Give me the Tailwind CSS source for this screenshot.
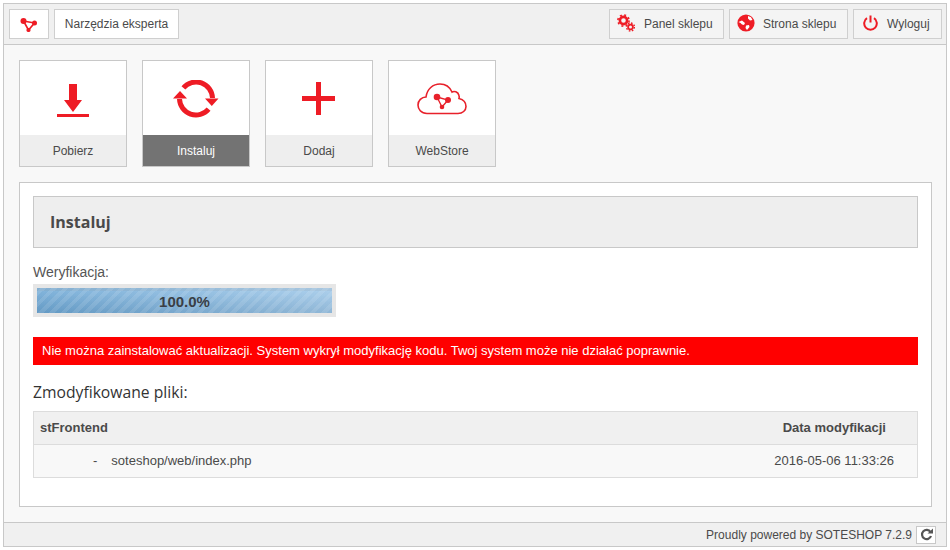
<!DOCTYPE html>
<html lang="pl">
  <head>
    <meta charset="UTF-8" />
    <title>Instaluj</title>
    <script src="https://cdn.jsdelivr.net/npm/@tailwindcss/browser@4"></script>
  </head>
  <body class="bg-white font-['Liberation_Sans',sans-serif] text-[12px] text-[#4a4a4a]">
    <div class="mx-[3px] mt-[3px] flex h-[544px] w-[944px] flex-col border border-[#c8c8c8] bg-[#f8f8f8]">
      <!-- top bar -->
      <div class="flex h-[41px] shrink-0 items-start justify-between border-b border-[#c8c8c8] bg-[#f0f0f0] pl-[5px] pr-[4px] pt-[5px]">
        <div class="flex gap-[5px]">
          <div class="flex h-[30px] w-[40px] items-center justify-center border border-[#cfcfcf] bg-white">
            <svg width="18" height="15" viewBox="0 0 18 15" fill="none" stroke="#ee1c25" stroke-width="1.6"><path d="M3.5 4 L14.5 6 L8.5 13 Z" /><circle cx="3.5" cy="4" r="3" fill="#ee1c25" stroke="none" /><circle cx="14.5" cy="6" r="2.5" fill="#ee1c25" stroke="none" /><circle cx="8.5" cy="13" r="2.1" fill="#ee1c25" stroke="none" /></svg>
          </div>
          <div class="flex h-[30px] w-[125px] items-center justify-center border border-[#cfcfcf] bg-white">Narzędzia eksperta</div>
        </div>
        <div class="flex gap-[5px]">
          <div class="flex h-[30px] w-[115px] items-center gap-[9px] border border-[#cfcfcf] bg-[#f4f4f4] pl-[7px]">
            <svg width="18" height="18" viewBox="0 0 18 18" class="mb-[2px]"><g fill="none" stroke="#ee1c25"><circle cx="6.5" cy="6.5" r="3.6" stroke-width="2.6" /><circle cx="13.5" cy="13" r="2.4" stroke-width="1.8" /><circle cx="6.5" cy="6.5" r="5.6" stroke-width="1.6" stroke-dasharray="2 2.4" /><circle cx="13.5" cy="13" r="4" stroke-width="1.4" stroke-dasharray="1.6 1.55" /></g></svg>
            <span>Panel sklepu</span>
          </div>
          <div class="flex h-[30px] w-[119px] items-center gap-[8px] border border-[#cfcfcf] bg-[#f4f4f4] pl-[7px]">
            <svg width="18" height="18" viewBox="0 0 18 18" class="mb-[2px]"><circle cx="9" cy="9" r="8.6" fill="#ee1c25" /><path d="M1.5 8 L5 6.5 L8 9 L7 11 L5 10.5 L3.5 9 Z M9 11.5 L12 11 L12.5 13 L10 16 L8.5 14 Z M11 2 L14 3.2 L15.5 6 L13 6.5 L11 4.5 Z" fill="#fff" /></svg>
            <span>Strona sklepu</span>
          </div>
          <div class="flex h-[30px] w-[89px] items-center gap-[9px] border border-[#cfcfcf] bg-[#f4f4f4] pl-[9px]">
            <svg width="15" height="16" viewBox="0 0 15 16" fill="none" stroke="#ee1c25" stroke-width="2" class="mb-[3px]"><path d="M4 3.2 A6.3 6.3 0 1 0 11 3.2" /><path d="M7.5 0.5 V7.5" /></svg>
            <span>Wyloguj</span>
          </div>
        </div>
      </div>
      <div class="flex flex-1 flex-col px-[15px] pt-[15px]">
        <!-- tiles -->
        <div class="flex gap-[15px]">
          <div class="flex h-[107px] w-[108px] flex-col border border-[#c8c8c8] bg-white">
            <div class="flex flex-1 items-center justify-center">
              <svg width="32" height="33" viewBox="0 0 32 33" fill="#ee1c25" class="mt-[5px]"><path d="M12 0 H20 V16 H25 L16 28 L7 16 H12 Z" /><rect x="0" y="30" width="32" height="3" /></svg>
            </div>
            <div class="flex h-[31px] items-center justify-center bg-[#eeeeee]">Pobierz</div>
          </div>
          <div class="flex h-[107px] w-[108px] flex-col border border-[#c8c8c8] bg-white">
            <div class="flex flex-1 items-center justify-center">
              <svg width="46" height="38" viewBox="0 0 46 38" fill="none" class="mt-[1px]"><path d="M10.4 7.9 A16.5 16.5 0 0 1 39.5 18" stroke="#ee1c25" stroke-width="5" /><path d="M35.6 29.1 A16.5 16.5 0 0 1 6.5 19" stroke="#ee1c25" stroke-width="5" /><path d="M32 18.5 H45.5 L38.8 26 Z M0 18.5 H14 L7 11 Z" fill="#ee1c25" /></svg>
            </div>
            <div class="flex h-[31px] items-center justify-center bg-[#737373] text-white">Instaluj</div>
          </div>
          <div class="flex h-[107px] w-[108px] flex-col border border-[#c8c8c8] bg-white">
            <div class="flex flex-1 items-center justify-center">
              <svg width="33" height="33" viewBox="0 0 33 33" fill="#ee1c25" class="mr-[2px] mt-[1px]"><rect x="14" y="0" width="5" height="33" /><rect x="0" y="14" width="33" height="5" /></svg>
            </div>
            <div class="flex h-[31px] items-center justify-center bg-[#eeeeee]">Dodaj</div>
          </div>
          <div class="flex h-[107px] w-[108px] flex-col border border-[#c8c8c8] bg-white">
            <div class="flex flex-1 items-center justify-center">
              <svg width="50" height="32" viewBox="0 0 50 32" class="mt-[1px]"><path d="M10 30.5 C4 30.5 1 26 1 22 C1 17.5 4.5 14 9 14 C10 6 16 1 23 1 C29 1 33 4.5 35 9 C37 7.8 41 8.5 42 12.5 C42.3 13.5 42.3 14.5 42 15.5 C46 16.5 49 19.5 49 23.5 C49 27.5 45.5 30.5 41 30.5 Z" fill="none" stroke="#e8212b" stroke-width="1.6" /><path d="M20 14 L31 17 L25 24 Z" fill="none" stroke="#e8212b" stroke-width="1.3" /><circle cx="20" cy="14" r="3.3" fill="#e8212b" /><circle cx="31" cy="17" r="3" fill="#e8212b" /><circle cx="25" cy="24" r="2.3" fill="#e8212b" /></svg>
            </div>
            <div class="flex h-[31px] items-center justify-center bg-[#eeeeee]">WebStore</div>
          </div>
        </div>
        <!-- main panel -->
        <div class="mt-[15px] h-[325px] w-[913px] border border-[#c8c8c8] bg-white px-[13px] pt-[13px]">
          <div class="flex h-[52px] w-[885px] items-center border border-[#c8c8c8] bg-[#eeeeee] pl-[16px] font-['Open_Sans',sans-serif] text-[16px] font-bold">Instaluj</div>
          <div class="mt-[16px] text-[14px] leading-[16px] text-[#555]">Weryfikacja:</div>
          <div class="mt-[4px] h-[33px] w-[303px] bg-[#e6e6e6] p-[4px]">
            <div class="flex h-[25px] items-center justify-center border-t-[3px] border-[#ffffff33] bg-[repeating-linear-gradient(135deg,#ffffff1a_0,#ffffff1a_4px,#ffffff00_4px,#ffffff00_8px),linear-gradient(to_bottom,#ffffff26,#00000014),linear-gradient(90deg,#6ba6d4,#9cc6e8)] text-[15px] font-bold text-[#3a3f46]">100.0%</div>
          </div>
          <div class="mt-[20px] flex h-[28px] w-[885px] items-center bg-[#ff0000] pl-[9px] text-[13px] text-white">Nie można zainstalować aktualizacji. System wykrył modyfikację kodu. Twoj system może nie działać poprawnie.</div>
          <div class="mt-[17px] font-['Open_Sans',sans-serif] text-[15.7px] leading-[20px] text-[#333]">Zmodyfikowane pliki:</div>
          <div class="mt-[9px] w-[885px] border border-[#dcdcdc] text-[13px]">
            <div class="flex h-[33px] items-center justify-between border-b border-[#dcdcdc] bg-[#f0f0f0] pl-[6px] pr-[31px] font-bold">
              <span>stFrontend</span><span>Data modyfikacji</span>
            </div>
            <div class="flex h-[32px] items-center justify-between bg-[#f8f8f8] pl-[59px] pr-[23px]">
              <span class="flex gap-[14px]"><span>-</span><span>soteshop/web/index.php</span></span><span>2016-05-06 11:33:26</span>
            </div>
          </div>
        </div>
      </div>
      <!-- footer -->
      <div class="flex h-[24px] shrink-0 items-center justify-end gap-[4px] border-t border-[#c8c8c8] bg-[#f0f0f0] pr-[10px]">
        <span>Proudly powered by SOTESHOP 7.2.9</span>
        <div class="flex h-[18px] w-[20px] items-center justify-center border border-[#c8c8c8] bg-white">
          <svg width="13" height="13" viewBox="0 0 13 13" fill="none"><path d="M10.5 4 A4.6 4.6 0 1 0 11 8" stroke="#555" stroke-width="2.2" /><path d="M7.5 5.5 H13 V0.5 Z" fill="#555" /></svg>
        </div>
      </div>
    </div>
  </body>
</html>
